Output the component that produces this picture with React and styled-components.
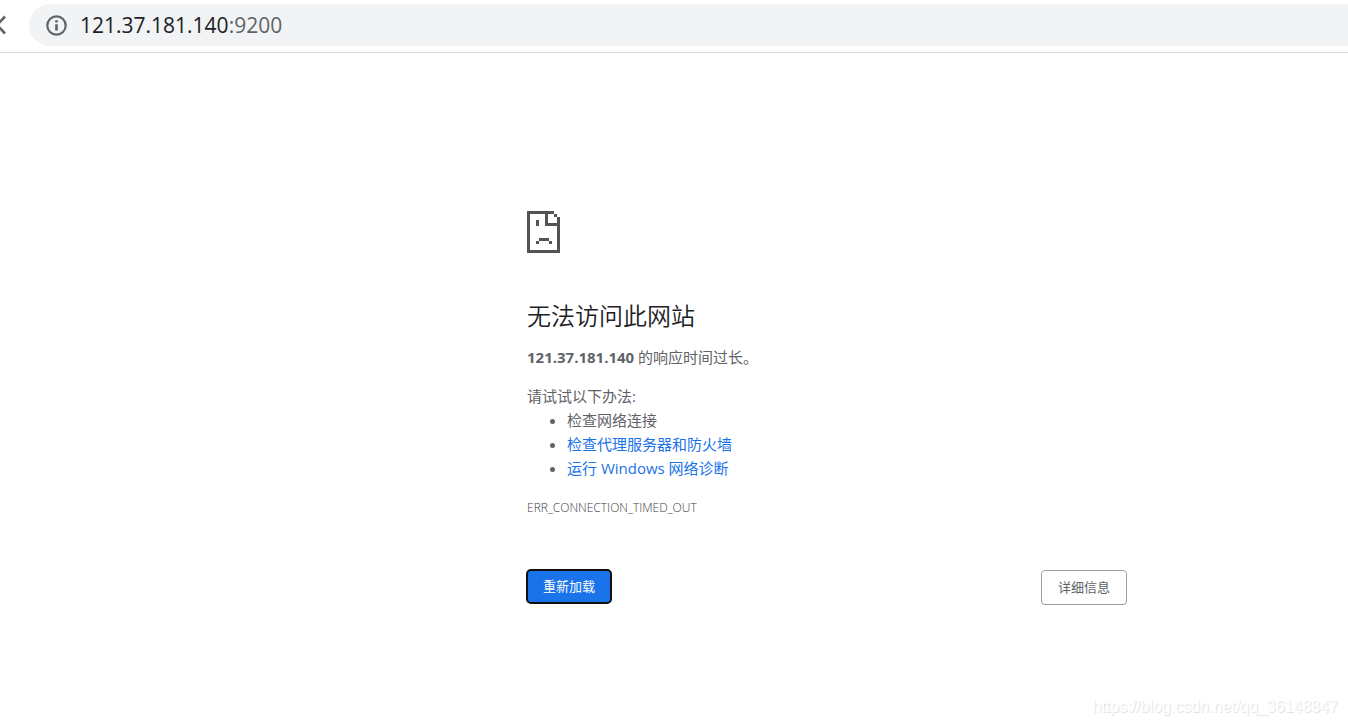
import * as React from 'react';
import styled, { createGlobalStyle, css } from 'styled-components';


const color = {
  heading: '#202124',
  text: '#5f6368',
  code: '#3c4043',
  link: '#1a73e8',
  field: '#f1f3f4',
  line: '#dadce0',
  border: '#9aa0a6',
};

const GlobalStyle = createGlobalStyle`
  body {
    margin: 0;
    background: #fff;
    color: ${color.text};
    font-family: 'Open Sans', 'Noto Sans CJK SC', sans-serif;
    font-size: 15px;
    line-height: 24px;
  }
`;

const Page = styled.div`
  display: flex;
  flex-direction: column;
  min-height: 100vh;
`;

const Toolbar = styled.header`
  display: flex;
  align-items: center;
  gap: 23px;
  padding-top: 4px;
  padding-bottom: 6px;
  border-bottom: 1px solid ${color.line};
`;

const BackButton = styled.button`
  display: flex;
  padding: 0;
  border: 0;
  background: none;
  cursor: pointer;
`;

const AddressBar = styled.div`
  flex-grow: 1;
  display: flex;
  align-items: center;
  gap: 13px;
  height: 42px;
  padding-left: 17px;
  border-radius: 21px 0 0 21px;
  background: ${color.field};
`;

const Address = styled.span`
  font-size: 21px;
  color: ${color.text};
`;

const Host = styled.span`
  color: ${color.heading};
`;

const Main = styled.main`
  flex-grow: 1;
  padding-top: 158px;
  padding-left: 306px;
`;

const Content = styled.div`
  max-width: 600px;
  margin: 0 auto;
`;

const PageIcon = styled.svg`
  display: block;
  margin-bottom: 47px;
`;

const Title = styled.h1`
  margin: 0 0 13px;
  font-size: 24px;
  font-weight: 350;
  line-height: 32px;
  color: ${color.heading};
`;

const Text = styled.p`
  margin: 0 0 15px;
`;

const Suggestions = styled.div`
  margin-bottom: 16px;
`;

const List = styled.ul`
  margin: 0;
  padding-left: 40px;
`;

const Link = styled.a`
  color: ${color.link};
  text-decoration: none;
`;

const ErrorCode = styled.div`
  font-size: 12px;
  font-weight: 300;
  color: ${color.code};
`;

const Buttons = styled.div`
  display: flex;
  justify-content: space-between;
  align-items: flex-start;
  margin-top: 50px;
`;

const Button = styled.button`
  padding: 8px 16px;
  border: 1px solid ${color.border};
  border-radius: 4px;
  background: #fff;
  color: ${color.text};
  font-family: inherit;
  font-size: 13px;
  line-height: 17px;
  cursor: pointer;

  ${props => props.$isPrimary && css`
    border: 0;
    outline: 2px solid #101010;
    outline-offset: -1px;
    background: ${color.link};
    color: #fff;
  `}
`;

const Watermark = styled.footer`
  padding-right: 10px;
  padding-bottom: 6px;
  font-family: 'Liberation Sans', Arial, sans-serif;
  font-size: 16px;
  text-align: right;
  color: #fff;
  text-shadow: 1px 1px 1px #ddd;
`;


const SadPage = () => (
  <PageIcon width="33" height="42" viewBox="0 0 33 42" fill="#535353" shapeRendering="crispEdges" aria-hidden="true">
    <path d="M0 0h27v3h3v3h3v36H0zM3 3v36h27V15H18V3zM21 3v9h9V6h-3V3z" fillRule="evenodd"/>
    <path d="M9 9h3v6H9zM12 27h10v3H12zM9 30h3v3H9zM22 30h3v3h-3z"/>
  </PageIcon>
);

const BackIcon = () => (
  <svg width="6" height="20" viewBox="0 0 6 20" fill="none" stroke={ color.text } strokeWidth="2.6" aria-hidden="true">
    <path d="M5 1.5l-8 8.5 8 8.5"/>
  </svg>
);

const InfoIcon = () => (
  <svg width="21" height="21" viewBox="0 0 21 21" fill={ color.text } aria-hidden="true">
    <circle cx="10.5" cy="10.5" r="9.2" fill="none" stroke={ color.text } strokeWidth="2.2"/>
    <path d="M9.2 5.2h2.6v2.4H9.2zM9.2 9.3h2.6v6.2H9.2z"/>
  </svg>
);

export default function App() {
  return (
    <Page>
      <GlobalStyle/>
      <Toolbar>
        <BackButton type="button" aria-label="返回"><BackIcon/></BackButton>
        <AddressBar>
          <InfoIcon/>
          <Address><Host>121.37.181.140</Host>:9200</Address>
        </AddressBar>
      </Toolbar>

      <Main lang="zh-CN">
        <Content>
          <SadPage/>
          <Title>无法访问此网站</Title>
          <Text><strong>121.37.181.140</strong> 的响应时间过长。</Text>
          <Suggestions>
            请试试以下办法:
            <List>
              <li>检查网络连接</li>
              <li><Link href="#proxy">检查代理服务器和防火墙</Link></li>
              <li><Link href="#diagnostics">运行 Windows 网络诊断</Link></li>
            </List>
          </Suggestions>
          <ErrorCode>ERR_CONNECTION_TIMED_OUT</ErrorCode>
          <Buttons>
            <Button type="button" $isPrimary>重新加载</Button>
            <Button type="button">详细信息</Button>
          </Buttons>
        </Content>
      </Main>

      <Watermark>https://blog.csdn.net/qq_36148847</Watermark>
    </Page>
  );
}
